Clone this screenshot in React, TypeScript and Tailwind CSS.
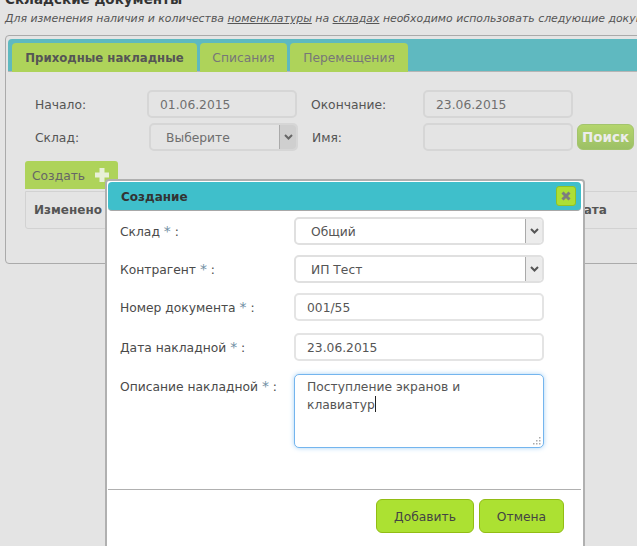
import React from "react";

const font = { fontFamily: '"DejaVu Sans", Verdana, sans-serif' };

function Chevron() {
  return (
    <svg width="9" height="6" viewBox="0 0 9 6" className="block">
      <path d="M1 1 L4.5 4.5 L8 1" fill="none" stroke="currentColor" strokeWidth="2" />
    </svg>
  );
}

function FakeSelect({ text, w, dim }: { text: string; w: string; dim?: boolean }) {
  return (
    <div className={`${w} h-[28px] flex rounded-[5px] border-2 overflow-hidden ${dim ? "border-[#d6d6d6] bg-[#e4e4e4] text-[#6f6f6f]" : "border-[#e0e0e0] bg-white text-[#555]"}`}>
      <div className="flex-1 pl-[15px] leading-[26px] text-[12.3px]">{text}</div>
      <div className={`w-[17px] flex items-center justify-center border-l border-[#aaa] ${dim ? "bg-[#cfcfcf] text-[#666]" : "bg-[#ececec] text-[#555]"}`}>
        <Chevron />
      </div>
    </div>
  );
}

function DimInput({ text, w }: { text: string; w: string }) {
  return (
    <div className={`${w} h-[28px] rounded-[5px] border-2 border-[#d6d6d6] pl-[11px] leading-[27px] text-[12.3px] text-[#6f6f6f]`}>{text}</div>
  );
}

function Input({ text }: { text: string }) {
  return (
    <div className="w-[250px] h-[28px] rounded-[5px] border-2 border-[#e4e4e4] bg-white pl-[11px] leading-[27px] text-[12.3px] text-[#555]">{text}</div>
  );
}

function Label({ text, w }: { text: string; w: string }) {
  return <div className={`${w} pt-[2px] text-[12.3px] text-[#555]`}>{text}</div>;
}

function ModalLabel({ children }: { children: React.ReactNode }) {
  return <div className="w-[174px] text-[12.3px] text-[#4a4a4a]">{children}</div>;
}

function Star() {
  return <span className="text-[14px] text-[#6f8ea3]">*</span>;
}

export default function App() {
  return (
    <div className="relative w-[637px] h-[546px] overflow-hidden bg-[#e4e4e4]" style={font}>
      <div className="pl-[5px] -mt-[9px] h-[44px] whitespace-nowrap overflow-hidden">
        <div className="text-[13.5px] leading-[17px] font-bold text-[#333]">Складские документы</div>
        <div className="mt-[3px] text-[10.9px] leading-[16px] italic text-[#555]">
          Для изменения наличия и количества <span className="underline">номенклатуры</span> на <span className="underline">складах</span> необходимо использовать следующие документы
        </div>
      </div>

      <div className="ml-[5px] w-[700px] h-[229px] border border-[#aaa] rounded-[4px] pt-[3px] pl-[2px]">
        <div className="h-[33px] w-[690px] bg-[#5fb9c0] rounded-t-[4px] pl-[4px] pt-[4px] flex gap-[3px] border-b border-[#b5b5b5]">
          <div className="w-[185px] h-[29px] bg-[#aed35a] rounded-t-[4px] text-center text-[11.7px] leading-[31px] font-bold text-[#555]">Приходные накладные</div>
          <div className="w-[87px] h-[29px] bg-[#aed35a] rounded-t-[4px] text-center text-[12.3px] leading-[31px] text-[#777]">Списания</div>
          <div className="w-[118px] h-[29px] bg-[#aed35a] rounded-t-[4px] text-center text-[12.3px] leading-[31px] text-[#777]">Перемещения</div>
        </div>

        <div className="pl-[27px] pt-[18px] flex items-center h-[46px]">
          <Label text="Начало:" w="w-[112px]" />
          <DimInput text="01.06.2015" w="w-[150px]" />
          <div className="w-[14px]" />
          <Label text="Окончание:" w="w-[112px]" />
          <DimInput text="23.06.2015" w="w-[150px]" />
        </div>
        <div className="pl-[27px] pt-[5px] flex items-center h-[33px]">
          <Label text="Склад:" w="w-[114px]" />
          <FakeSelect text="Выберите" w="w-[149px]" dim />
          <div className="w-[14px]" />
          <Label text="Имя:" w="w-[111px]" />
          <DimInput text="" w="w-[150px]" />
          <div className="ml-[4px] w-[57px] h-[26px] rounded-[6px] border border-[#a3c46c] bg-gradient-to-b from-[#b4d56c] to-[#9cc066] text-center text-[13.5px] leading-[24px] font-bold text-[#ececec]">Поиск</div>
        </div>

        <div className="ml-[17px] mt-[10px] w-[93px] h-[28px] bg-[#aed35a] rounded-t-[3px] flex items-center pl-[7px] pt-[2px] text-[12.3px] text-[#666]">
          Создать
          <svg width="16" height="16" viewBox="0 0 16 16" className="ml-[9px] -mt-[2px]">
            <path d="M8 1 V15 M1 8 H15" stroke="#e8f0d8" strokeWidth="5" />
          </svg>
        </div>
        <div className="ml-[17px] mt-[2px] w-[640px] h-[38px] border border-[#d2d2d2] rounded-b-[3px] flex items-center pl-[8px] text-[12px] font-bold text-[#555]">
          <span>Изменено</span>
          <span className="ml-[471px]">Дата</span>
        </div>
      </div>

      <div className="absolute left-[105px] top-[179px] w-[480px] h-[380px] bg-white border-2 border-[#b0b0b0] rounded-t-[4px] pt-[1px] pl-[1px]">
        <div className="w-[473px] h-[29px] bg-[#3fbfcb] rounded-[4px] border-b border-[#a8a8a8] flex items-center justify-between pl-[13px] pr-[5px]">
          <span className="text-[12px] pt-[2px] font-bold text-[#333]">Создание</span>
          <div className="w-[20px] h-[20px] rounded-[3px] bg-[#acdf35] border border-[#93c221] flex items-center justify-center">
            <svg width="10" height="10" viewBox="0 0 10 10">
              <path d="M1.5 1.5 L8.5 8.5 M8.5 1.5 L1.5 8.5" stroke="#7d7d7d" strokeWidth="3" />
            </svg>
          </div>
        </div>

        <div className="pl-[12px]">
          <div className="flex items-center mt-[6px]">
            <ModalLabel>Склад <Star /> :</ModalLabel>
            <FakeSelect text="Общий" w="w-[250px]" />
          </div>
          <div className="flex items-center mt-[10px]">
            <ModalLabel>Контрагент <Star /> :</ModalLabel>
            <FakeSelect text="ИП Тест" w="w-[250px]" />
          </div>
          <div className="flex items-center mt-[10px]">
            <ModalLabel>Номер документа <Star /> :</ModalLabel>
            <Input text="001/55" />
          </div>
          <div className="flex items-center mt-[12px]">
            <ModalLabel>Дата накладной <Star /> :</ModalLabel>
            <Input text="23.06.2015" />
          </div>
          <div className="flex items-start mt-[13px]">
            <div className="pt-[2px]">
              <ModalLabel>Описание накладной <Star /> :</ModalLabel>
            </div>
            <div className="relative w-[250px] h-[74px] rounded-[5px] border border-[#74b5ee] shadow-[0_0_5px_#a9d3f5] bg-white pl-[12px] pt-[4px] text-[12.3px] leading-[17px] text-[#555]">
              Поступление экранов и
              <br />
              клавиатур<span className="inline-block w-px h-[16px] bg-[#222] align-text-bottom" />
              <svg width="9" height="9" viewBox="0 0 9 9" className="absolute right-[2px] bottom-[2px]">
                <path d="M7 1h1.5v1.5H7zM4 4h1.5v1.5H4zM7 4h1.5v1.5H7zM1 7h1.5v1.5H1zM4 7h1.5v1.5H4zM7 7h1.5v1.5H7z" fill="#aaa" />
              </svg>
            </div>
          </div>
        </div>

        <div className="mt-[41px] w-[473px] border-t border-[#b0b0b0]" />

        <div className="flex justify-end gap-[5px] mt-[9px] pr-[19px]">
          <div className="w-[98px] h-[34px] rounded-[6px] border border-[#92bd14] bg-[#ace132] text-center text-[12.3px] leading-[35px] text-[#444]">Добавить</div>
          <div className="w-[85px] h-[34px] rounded-[6px] border border-[#92bd14] bg-[#ace132] text-center text-[12.3px] leading-[35px] text-[#444]">Отмена</div>
        </div>
      </div>
    </div>
  );
}
